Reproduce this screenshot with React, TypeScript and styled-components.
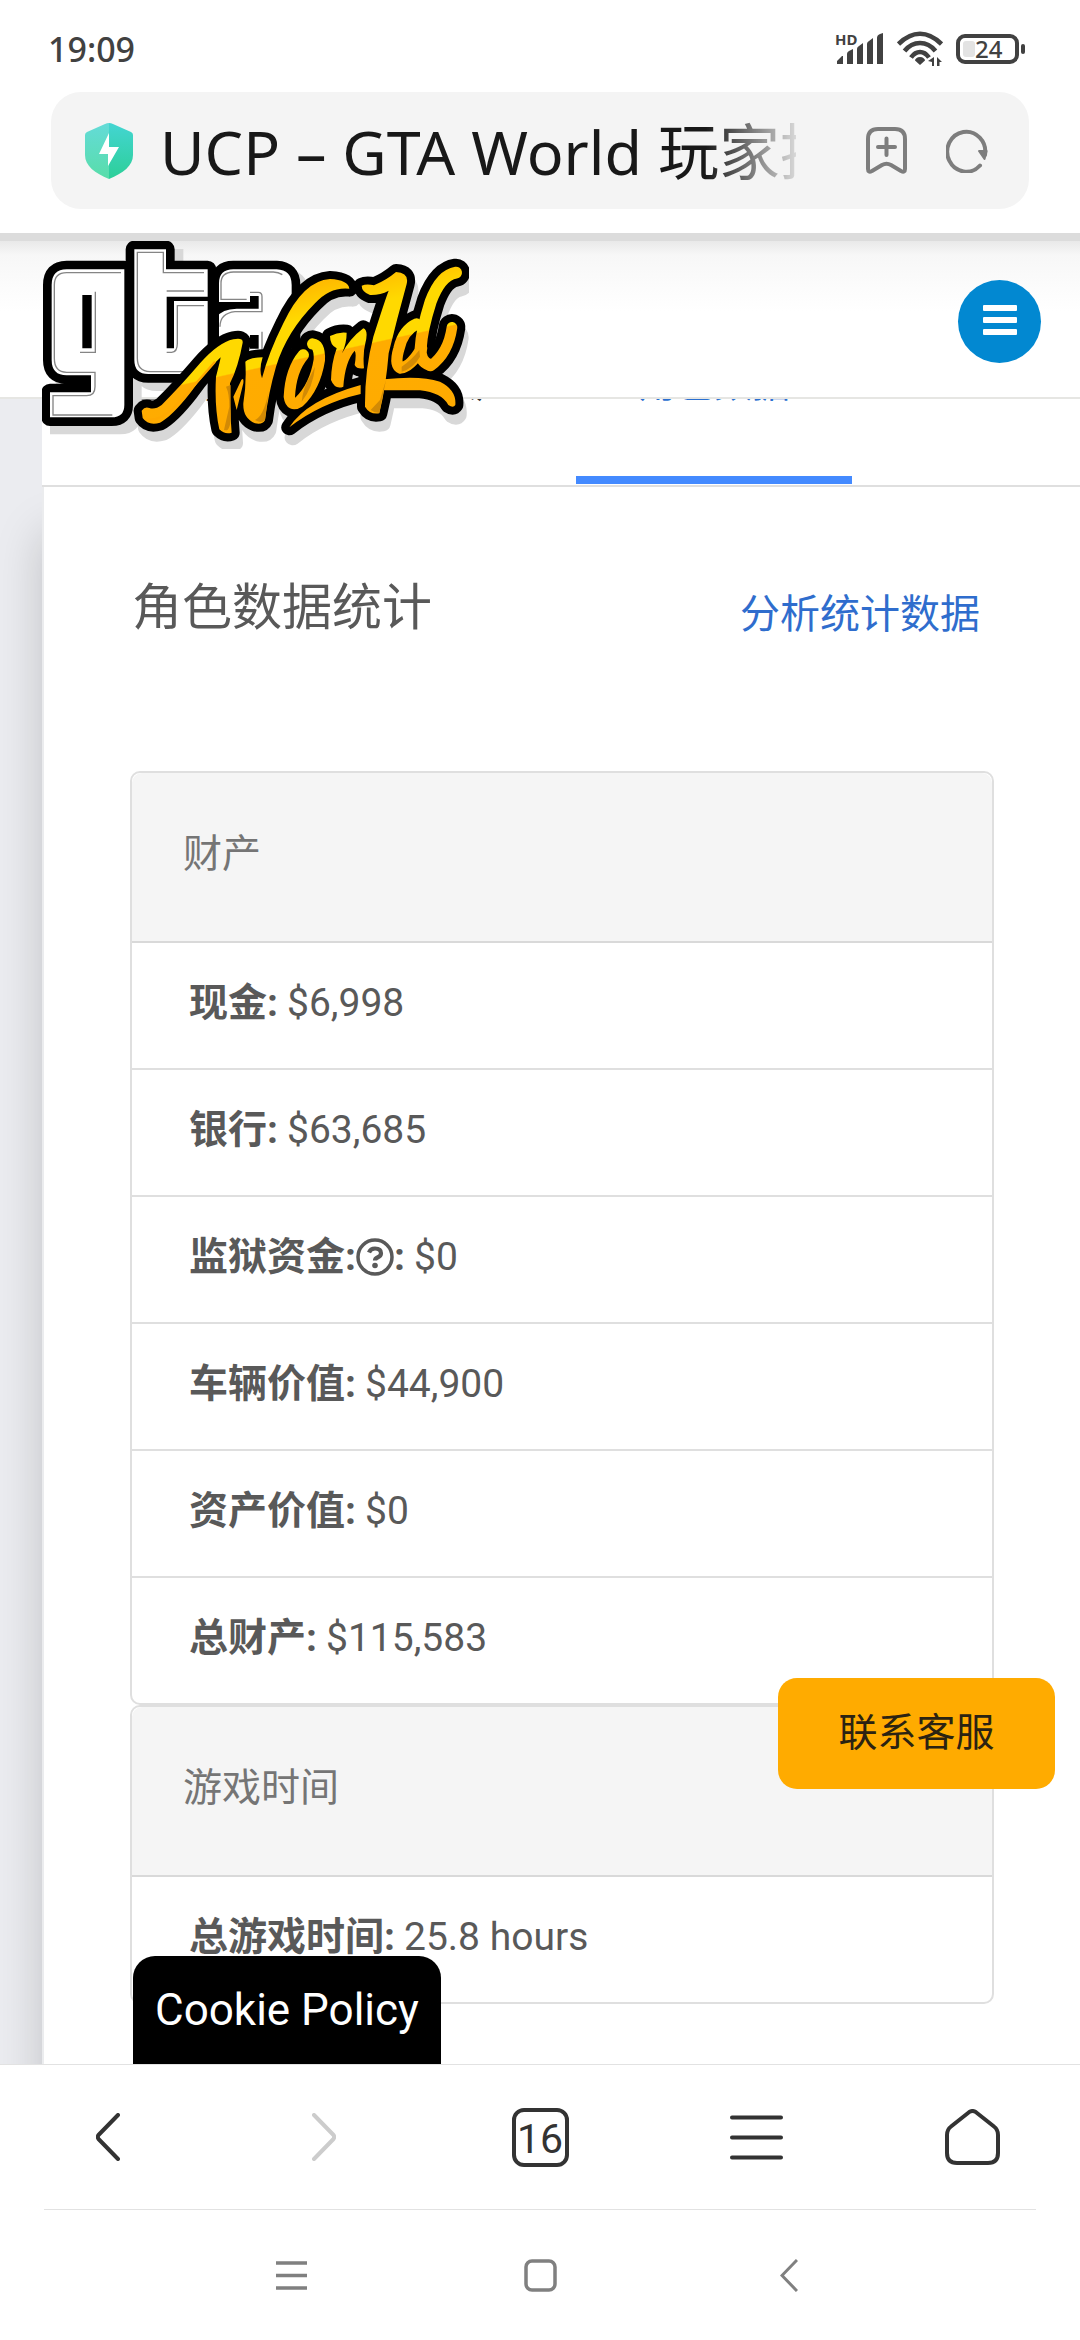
import React from "react";
import styled, { createGlobalStyle } from "styled-components";

const uiFont = `"Noto Sans", "Noto Sans CJK SC", sans-serif`;
const webFont = `Roboto, "Noto Sans CJK SC", sans-serif`;

const GlobalStyle = createGlobalStyle`
  *, *::before, *::after { box-sizing: border-box; }
  body { margin: 0; background: #fff; }
  button, input { font: inherit; color: inherit; border: 0; padding: 0; margin: 0; background: none; }
  h1, h2, ul, p { margin: 0; padding: 0; font-weight: 400; }
  svg { display: block; flex: none; }
`;

const Phone = styled.div`
  display: flex;
  flex-direction: column;
  height: 100vh;
  overflow: hidden;
  background: #fff;
  font-family: ${uiFont};
`;

const StatusBar = styled.div`
  display: flex;
  align-items: center;
  justify-content: space-between;
  height: 92px;
  padding: 6px 54px 0 48px;
  color: #414141;
`;

const Clock = styled.time`
  font-size: 34px;
  line-height: 40px;
  font-weight: 500;
`;

const StatusIcons = styled.div`
  display: flex;
  align-items: center;
  gap: 13px;
`;

const AddressBar = styled.div`
  display: flex;
  align-items: center;
  height: 117px;
  margin: 0 51px 24px;
  padding: 0 41px 0 34px;
  border-radius: 30px;
  background: #f4f4f4;
  color: #7d7d7d;
`;

const AddressInput = styled.input`
  flex: 1;
  min-width: 0;
  margin: 0 70px 0 27px;
  height: 94px;
  padding-bottom: 4px;
  font-size: 61px;
  line-height: 90px;
  color: #181818;
  outline: 0;
  mask-image: linear-gradient(to right, #000 calc(100% - 90px), rgba(0, 0, 0, 0.12));
`;

const BarButtons = styled.div`
  display: flex;
  align-items: center;
  gap: 39px;
`;

const IconButton = styled.button`
  display: flex;
  align-items: center;
  justify-content: center;
  cursor: pointer;
`;

const WebView = styled.div`
  position: relative;
  display: flex;
  flex-direction: column;
  flex: 1;
  min-height: 0;
  overflow: hidden;
  border-top: 8px solid #dcdcdc;
  background: #ebecf0;
  font-family: ${webFont};
`;

const SiteHeader = styled.header`
  position: relative;
  z-index: 3;
  flex: none;
  display: flex;
  align-items: flex-start;
  justify-content: space-between;
  height: 158px;
  padding: 0 39px 0 42px;
  border-bottom: 2px solid #e6e6e3;
  background: linear-gradient(#e9e9e9, #f7f7f7 14px, #fcfcfc 48px, #fff 70px);
`;

const LogoLink = styled.a`
  display: block;
  height: 156px;
`;

const MenuButton = styled(IconButton)`
  width: 83px;
  height: 83px;
  margin-top: 39px;
  padding-bottom: 4px;
  border-radius: 50%;
  background: #0288d1;
`;

const Main = styled.main`
  flex: none;
  margin-left: 42px;
`;

const Tabs = styled.nav`
  position: relative;
  z-index: 1;
  display: flex;
  align-items: flex-end;
  height: 88px;
  padding-left: 20px;
  overflow: hidden;
  border-bottom: 2px solid #dfdfdf;
  background: #fff;
`;

const Tab = styled.a<{ $active?: boolean }>`
  flex: none;
  padding: 0 62px 70px;
  border-bottom: 8px solid ${(p) => (p.$active ? "#448aff" : "transparent")};
  margin-bottom: 1px;
  font-size: 38px;
  line-height: 44px;
  color: ${(p) => (p.$active ? "#2a6fd0" : "#333")};
  text-decoration: none;
`;

const Panel = styled.section`
  min-height: 1700px;
  padding: 0 86px;
  border-left: 2px solid #ebecee;
  background: #fff;
  box-shadow: 0 46px 44px rgba(0, 0, 0, 0.18);
`;

const PanelHead = styled.div`
  display: flex;
  align-items: flex-start;
  justify-content: space-between;
  height: 284px;
  padding: 83px 14px 0 2px;
`;

const PanelTitle = styled.h1`
  font-size: 50px;
  line-height: 76px;
  color: #595959;
`;

const PanelLink = styled.a`
  font-size: 40px;
  line-height: 90px;
  color: #2f6dcd;
  text-decoration: none;
`;

const Card = styled.section`
  border: 2px solid #dfdfdf;
  border-radius: 10px;
`;

const CardTitle = styled.h2`
  height: 170px;
  padding: 53px 51px 0;
  border-bottom: 2px solid #d9d9d9;
  border-radius: 10px 10px 0 0;
  background: #f5f5f5;
  font-size: 39px;
  line-height: 56px;
  color: #757575;
`;

const Rows = styled.ul`
  list-style: none;
`;

const Row = styled.li`
  display: flex;
  align-items: center;
  gap: 9px;
  min-height: 125px;
  padding: 0 57px 5px;
  font-size: 39px;
  line-height: 56px;
  color: #595959;

  & + & {
    min-height: 127px;
    border-top: 2px solid #dfdfdf;
  }
`;

const Label = styled.b`
  display: flex;
  align-items: center;
  font-weight: 700;
`;

const SupportButton = styled.button`
  position: absolute;
  right: 25px;
  bottom: 275px;
  width: 277px;
  height: 111px;
  padding-bottom: 9px;
  border-radius: 19px;
  background: #ffab00;
  color: #2b2312;
  font-size: 39px;
  cursor: pointer;
`;

const CookieLink = styled.a`
  position: absolute;
  left: 133px;
  bottom: 0;
  height: 108px;
  padding: 0 22px;
  border-radius: 22px 22px 0 0;
  background: #000;
  color: #fff;
  font-size: 44px;
  line-height: 108px;
  text-decoration: none;
`;

const BrowserNav = styled.nav`
  display: grid;
  grid-template-columns: repeat(5, 1fr);
  height: 145px;
  border-top: 1px solid #e2e2e2;
  color: #333;
`;

const TabCount = styled.span`
  display: flex;
  align-items: center;
  justify-content: center;
  width: 57px;
  height: 59px;
  padding-top: 3px;
  border: 4px solid #333;
  border-radius: 12px;
  font-family: Roboto, sans-serif;
  font-size: 41px;
  line-height: 48px;
`;

const SystemNav = styled.nav`
  display: grid;
  grid-template-columns: repeat(3, 249px);
  justify-content: center;
  height: 131px;
  margin: 0 44px;
  border-top: 1px solid #e2e2e2;
  color: #808080;
`;

const SignalIcon = () => (
  <svg width="49" height="32" viewBox="0 0 49 32" fill="currentColor">
    <text x="0" y="12" fontSize="15" fontWeight="700" fontFamily="Noto Sans, sans-serif">HD</text>
    <path d="M2 31V28l5-5h1v8zM12 31V21q0-2 2-3l4-2v15zM22 31V16q0-2 2-3l4-3v21zM32 31V11q0-2 2-3l4-3v26zM42 31V5q0-3 3-4l3-1v31z" strokeLinejoin="round" />
  </svg>
);

const WifiIcon = () => (
  <svg width="46" height="36" viewBox="0 0 46 36" fill="none" stroke="currentColor" strokeWidth="4.6">
    <path d="M1.500 13Q12 2.800 23 2.800T44.500 13M7.500 20Q14 12 23 12T38.500 20M14 26.500Q18 21 23 21T32 26.500" />
    <path d="M23 26c3 0 5 2 5 3.500L23 34l-5-4.500C18 28 20 26 23 26z" fill="currentColor" stroke="none" />
    <path d="M37 26v9h-2v-4l-4-1zM40 35V26l5 5h-2.500v4z" fill="currentColor" stroke="none" />
  </svg>
);

const BatteryIcon = () => (
  <svg width="70" height="30" viewBox="0 0 70 30">
    <rect x="2" y="2" width="59" height="26" rx="7" fill="none" stroke="currentColor" strokeWidth="4" />
    <rect x="7" y="7" width="12" height="16" rx="3" fill="#e3e3e3" />
    <rect x="65" y="10" width="4" height="10" rx="2" fill="currentColor" />
    <text x="19" y="24" fontSize="24" fontWeight="500" fontFamily="Noto Sans, sans-serif" fill="currentColor">24</text>
  </svg>
);

const ShieldIcon = () => (
  <svg width="48" height="56" viewBox="0 0 48 56">
    <defs>
      <linearGradient id="shieldLeft" x1="0" y1="0" x2="0" y2="1">
        <stop offset="0" stopColor="#64dbd8" />
        <stop offset="1" stopColor="#58dda9" />
      </linearGradient>
      <linearGradient id="shieldRight" x1="0" y1="0" x2="0" y2="1">
        <stop offset="0" stopColor="#44d5d2" />
        <stop offset="1" stopColor="#2ccf98" />
      </linearGradient>
    </defs>
    <path d="M24 0Q22 0 20 1L2 9Q0 10 0 12V32C0 43 10 50 24 56z" fill="url(#shieldLeft)" />
    <path d="M24 0Q26 0 28 1L46 9Q48 10 48 12V32C48 43 38 50 24 56z" fill="url(#shieldRight)" />
    <path d="M24 10L14 31H23V43L34 24H24z" fill="#fff" />
  </svg>
);

const BookmarkIcon = () => (
  <svg width="41" height="47" viewBox="0 0 41 47" fill="none" stroke="currentColor" strokeWidth="4" strokeLinecap="round" strokeLinejoin="round">
    <path d="M12 2H29Q39 2 39 12V42Q39 46 35 44L25 38Q20.500 35.500 16 38L6 44Q2 46 2 42V12Q2 2 12 2zM20.500 11.500V28M12 20H29" />
  </svg>
);

const ReloadIcon = () => (
  <svg width="42" height="44" viewBox="0 0 42 44" fill="none" stroke="currentColor" strokeWidth="4" strokeLinecap="round">
    <path d="M34 36.500A19 20 0 1 1 39 26" />
    <path d="M33 22L40.500 22L38.500 30z" fill="currentColor" strokeWidth="2" strokeLinejoin="round" />
  </svg>
);

const MenuBarsIcon = () => (
  <svg width="34" height="30" viewBox="0 0 34 30" fill="#fff">
    <rect width="34" height="6" rx="1" />
    <rect y="12" width="34" height="6" rx="1" />
    <rect y="24" width="34" height="6" rx="1" />
  </svg>
);

const HelpIcon = () => (
  <svg width="38" height="38" viewBox="0 0 38 38" fill="none" stroke="currentColor">
    <circle cx="19" cy="19" r="17" strokeWidth="3.500" />
    <path d="M13 14.500Q14.500 10.500 19 10.500Q25 10.500 25 15.200Q25 18 21.500 19.500Q19 20.700 19 22.500" strokeWidth="4.200" />
    <circle cx="19" cy="27.500" r="2.800" fill="currentColor" stroke="none" />
  </svg>
);

const BackIcon = () => (
  <svg width="24" height="48" viewBox="0 0 24 48" fill="none" stroke="currentColor" strokeWidth="4" strokeLinecap="round" strokeLinejoin="round">
    <path d="M22 2L2.500 22Q1 24 2.500 26L22 46" />
  </svg>
);

const ForwardIcon = () => (
  <svg width="24" height="48" viewBox="0 0 24 48" fill="none" stroke="#cccccc" strokeWidth="4" strokeLinecap="round" strokeLinejoin="round">
    <path d="M2 2L21.500 22Q23 24 21.500 26L2 46" />
  </svg>
);

const ListIcon = () => (
  <svg width="53" height="45" viewBox="0 0 53 45" stroke="currentColor" strokeWidth="4" strokeLinecap="round">
    <path d="M2 2.500H51M2 22.500H51M2 42.500H51" />
  </svg>
);

const HomeIcon = () => (
  <svg width="55" height="56" viewBox="0 0 55 56" fill="none" stroke="currentColor" strokeWidth="4" strokeLinejoin="round">
    <path d="M24 3.200Q27.500 .8 31 3.200L49 17.500Q53 20.500 53 26V44Q53 54 43 54H12Q2 54 2 44V26Q2 20.500 6 17.500z" />
  </svg>
);

const RecentIcon = () => (
  <svg width="31" height="29" viewBox="0 0 31 29" stroke="currentColor" strokeWidth="3.500">
    <path d="M0 2H31M0 14.500H31M0 27H31" />
  </svg>
);

const SquareIcon = () => (
  <svg width="33" height="33" viewBox="0 0 33 33" fill="none" stroke="currentColor" strokeWidth="3.500">
    <rect x="2" y="2" width="29" height="29" rx="6" />
  </svg>
);

const SystemBackIcon = () => (
  <svg width="18" height="33" viewBox="0 0 18 33" fill="none" stroke="currentColor" strokeWidth="3">
    <path d="M17 1L2 16.500L17 32" />
  </svg>
);

/* Logo artwork: white blocks behind, golden brush strokes in front. */
const blocks =
  "M313 148H140Q95 148 95 195V420Q95 466 140 466H213V517H90V592H275Q313 592 313 555Z" +
  "M343 88H438V148H563V462H385Q343 462 343 420Z" +
  "M640 148H770Q815 150 815 195V440H597V190Q597 148 640 148Z";

const blockCuts =
  "M187 225H215V385H187Z" +
  "M440 230H597V243H462V385H440Z" +
  "M592 246H690V228H716V266H650Q605 268 592 290Z" +
  "M690 345H716V386H690Z";

const blockLines =
  "M303 158H140Q103 158 103 195V415Q103 457 140 457H225V500Q225 527 200 527H99V585H277M226 215V397H180" +
  "M352 415V97H430V158H552M440 213H552M552 257H472V370Q472 397 455 397H440M352 415Q352 454 390 455H520" +
  "M787 164Q775 156 760 156H640Q603 157 603 190V238H680M690 217H715Q726 217 726 230V275H645Q600 280 600 320M726 335V397H690";

const brushFills =
  "M365 572Q375 558 388 564Q405 570 425 555Q480 500 540 430Q595 368 640 358Q670 352 668 368Q655 440 630 490Q628 560 635 638Q615 645 598 628Q583 560 588 470Q600 425 602 412Q560 450 510 520Q455 590 420 608Q385 618 368 594Z" +
  "M676 425Q690 412 728 412Q716 450 726 475Q745 400 790 310Q850 182 930 177Q985 180 988 206Q930 200 885 250Q800 335 768 440Q745 520 735 600Q728 615 705 610Q668 595 670 550Q680 490 676 425Z" +
  "M640 530L664 480Q672 470 670 490L650 570Z" +
  "M930 348Q955 335 980 338Q980 370 966 400Q990 355 1030 325Q1046 330 1036 370Q1028 400 1032 445Q1010 448 1004 435Q1010 400 1004 392Q975 425 970 500Q945 510 933 480Q934 430 950 385Q930 375 930 348Z" +
  "M1025 197Q1040 190 1062 196Q1100 180 1128 156Q1168 158 1160 192Q1130 300 1106 400Q1098 500 1078 580Q1050 585 1035 560Q1034 450 1060 350Q1095 240 1106 212Q1080 226 1050 225Q1025 215 1025 197Z" +
  "M808 622Q860 540 1022 495V522Q900 550 808 622Z" +
  "M1092 478Q1200 465 1260 485Q1310 510 1306 555Q1300 565 1285 555Q1265 518 1200 511Q1150 510 1090 510Z";

const brushStrokes: { d: string; w: number }[] = [
  { d: "M850 405Q812 450 808 530Q812 562 838 545Q885 500 898 420Q900 375 878 372", w: 34 },
  { d: "M1308 158Q1262 165 1232 245Q1205 330 1202 385Q1200 425 1228 434", w: 36 },
  { d: "M1190 312Q1150 330 1137 385Q1122 435 1142 444Q1172 440 1205 385", w: 34 },
  { d: "M1232 438Q1285 400 1296 322", w: 32 },
];

const Brush = ({ paint, grow }: { paint: string; grow: number }) => (
  <g stroke={paint} strokeLinejoin="round" strokeLinecap="round">
    <path d={brushFills} fill={paint} strokeWidth={grow} />
    {brushStrokes.map((s) => (
      <path key={s.d} d={s.d} fill="none" strokeWidth={s.w + grow} />
    ))}
  </g>
);

const Logo = () => (
  <svg width="427" height="208" viewBox="66 63 1281 624" aria-hidden="true">
    <defs>
      <linearGradient id="gold" gradientUnits="userSpaceOnUse" x1="570" y1="250" x2="660" y2="660">
        <stop offset="0" stopColor="#ffb800" />
        <stop offset="0.25" stopColor="#ffd900" />
        <stop offset="0.52" stopColor="#ffd900" />
        <stop offset="0.53" stopColor="#ffac00" />
        <stop offset="1" stopColor="#ffab00" />
      </linearGradient>
    </defs>
    <path d={blocks} fill="#d8d8d8" stroke="#d8d8d8" strokeWidth="52" transform="translate(26 25)" />
    <g transform="translate(10 30)"><Brush paint="#d8d8d8" grow={48} /></g>
    <path d={blocks} fill="#000" stroke="#000" strokeWidth="52" strokeLinejoin="round" />
    <path d={blocks} fill="#fff" />
    <path d={blockCuts} fill="#000" />
    <path d={blockLines} fill="none" stroke="#858585" strokeWidth="4" />
    <Brush paint="#000" grow={48} />
    <Brush paint="url(#gold)" grow={0} />
    <path d="M378 598Q415 606 460 565Q520 500 585 425" fill="none" stroke="#ffa800" strokeWidth="7" />
    <path d="M618 500Q628 520 628 560L612 630Q636 640 632 560V495zM705 600Q730 590 745 520L735 600Q725 612 705 600zM885 440Q880 500 845 545Q850 500 870 470zM1080 540L1098 480L1078 578Q1065 580 1052 570zM1145 440Q1175 420 1198 390L1200 410Q1180 445 1145 455z" fill="#d28a05" />
  </svg>
);

type Entry = { label: string; value: string; help?: boolean };

const assets: Entry[] = [
  { label: "现金:", value: "$6,998" },
  { label: "银行:", value: "$63,685" },
  { label: "监狱资金:", value: "$0", help: true },
  { label: "车辆价值:", value: "$44,900" },
  { label: "资产价值:", value: "$0" },
  { label: "总财产:", value: "$115,583" },
];

const playtime: Entry[] = [{ label: "总游戏时间:", value: "25.8 hours" }];

const StatCard = ({ title, entries }: { title: string; entries: Entry[] }) => (
  <Card>
    <CardTitle>{title}</CardTitle>
    <Rows>
      {entries.map((e) => (
        <Row key={e.label}>
          <Label>
            {e.label}
            {e.help && <><HelpIcon />:</>}
          </Label>
          <span>{e.value}</span>
        </Row>
      ))}
    </Rows>
  </Card>
);

export default function App() {
  return (
    <Phone>
      <GlobalStyle />
      <StatusBar>
        <Clock>19:09</Clock>
        <StatusIcons>
          <SignalIcon />
          <WifiIcon />
          <BatteryIcon />
        </StatusIcons>
      </StatusBar>
      <AddressBar>
        <ShieldIcon />
        <AddressInput aria-label="地址" readOnly value="UCP – GTA World 玩家控" />
        <BarButtons>
          <IconButton aria-label="添加书签"><BookmarkIcon /></IconButton>
          <IconButton aria-label="刷新"><ReloadIcon /></IconButton>
        </BarButtons>
      </AddressBar>
      <WebView>
        <SiteHeader>
          <LogoLink href="#" aria-label="GTA World"><Logo /></LogoLink>
          <MenuButton aria-label="菜单"><MenuBarsIcon /></MenuButton>
        </SiteHeader>
        <Main>
          <Tabs>
            <Tab href="#">控制台</Tab>
            <Tab href="#">我的账户</Tab>
            <Tab href="#" $active>角色数据</Tab>
          </Tabs>
          <Panel>
            <PanelHead>
              <PanelTitle>角色数据统计</PanelTitle>
              <PanelLink href="#">分析统计数据</PanelLink>
            </PanelHead>
            <StatCard title="财产" entries={assets} />
            <StatCard title="游戏时间" entries={playtime} />
          </Panel>
        </Main>
        <SupportButton>联系客服</SupportButton>
        <CookieLink href="#">Cookie Policy</CookieLink>
      </WebView>
      <BrowserNav>
        <IconButton aria-label="后退"><BackIcon /></IconButton>
        <IconButton aria-label="前进" disabled><ForwardIcon /></IconButton>
        <IconButton aria-label="标签页"><TabCount>16</TabCount></IconButton>
        <IconButton aria-label="菜单"><ListIcon /></IconButton>
        <IconButton aria-label="主页"><HomeIcon /></IconButton>
      </BrowserNav>
      <SystemNav>
        <IconButton aria-label="最近任务"><RecentIcon /></IconButton>
        <IconButton aria-label="桌面"><SquareIcon /></IconButton>
        <IconButton aria-label="返回"><SystemBackIcon /></IconButton>
      </SystemNav>
    </Phone>
  );
}
